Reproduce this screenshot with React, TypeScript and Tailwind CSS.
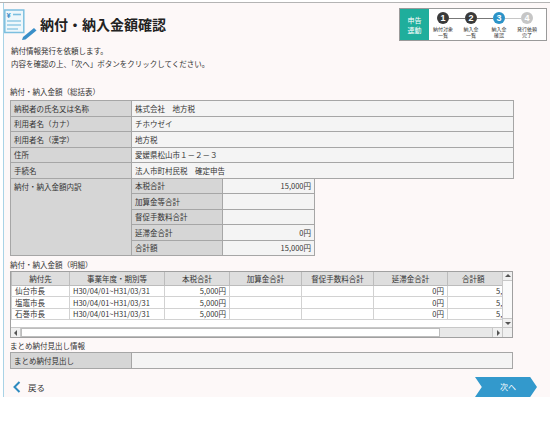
import React from 'react';

const summaryRows = [
  { label: '納税者の氏名又は名称', value: '株式会社　地方税' },
  { label: '利用者名（カナ）', value: 'チホウゼイ' },
  { label: '利用者名（漢字）', value: '地方税' },
  { label: '住所', value: '愛媛県松山市１－２－３' },
  { label: '手続名', value: '法人市町村民税　確定申告' },
];

const breakdown = [
  { label: '本税合計', value: '15,000円' },
  { label: '加算金等合計', value: '' },
  { label: '督促手数料合計', value: '' },
  { label: '延滞金合計', value: '0円' },
  { label: '合計額', value: '15,000円' },
];

const detailRows = [
  { to: '仙台市長', period: 'H30/04/01~H31/03/31' },
  { to: '塩竈市長', period: 'H30/04/01~H31/03/31' },
  { to: '石巻市長', period: 'H30/04/01~H31/03/31' },
];

const steps = [
  { n: '1', color: 'bg-[#3a3a3a]', top: '納付対象', bottom: '一覧' },
  { n: '2', color: 'bg-[#3a3a3a]', top: '納入金', bottom: '一覧' },
  { n: '3', color: 'bg-[#2b93c8]', top: '納入金', bottom: '確認' },
  { n: '4', color: 'bg-[#c6c6c6]', top: '発行依頼', bottom: '完了' },
];

const PageIcon = () => (
  <svg width="34" height="32" viewBox="0 0 34 32" className="shrink-0">
    <rect x="0.8" y="2" width="19" height="22.5" fill="#eef7fb" stroke="#7cbfdf" strokeWidth="1.5" />
    <text x="2.5" y="9.5" fontSize="7.5" fontWeight="bold" fill="#3a8fc8" fontFamily="Liberation Sans, sans-serif">¥</text>
    <line x1="9" y1="6.5" x2="17" y2="6.5" stroke="#7cbfdf" strokeWidth="1.6" />
    <line x1="3" y1="13" x2="17" y2="13" stroke="#7cbfdf" strokeWidth="1.2" />
    <line x1="3" y1="17" x2="17" y2="17" stroke="#7cbfdf" strokeWidth="1.2" />
    <line x1="3" y1="21" x2="14" y2="21" stroke="#7cbfdf" strokeWidth="1.2" />
    <polygon points="19,29 30,20 32.5,22.5 21.5,31.5 18,32" fill="#3a8fc8" />
  </svg>
);

const StepBox = () => (
  <div className="mt-[5px] mr-[3px] flex h-[33px] w-[148px] border border-[#9a9a9a] bg-white">
    <div className="flex w-[29px] flex-col items-center justify-center bg-[#1fae9c] text-[7px] leading-[10px] text-white">
      <span>申告</span>
      <span>連動</span>
    </div>
    <div className="flex flex-col">
      <div className="flex items-center pl-[8px] pt-[3px]">
        {steps.map((s, i) => (
          <React.Fragment key={s.n}>
            <div className={`flex h-[12px] w-[12px] items-center justify-center rounded-full ${s.color} text-[9px] font-bold leading-none text-white font-['Liberation_Sans',sans-serif]`}>
              {s.n}
            </div>
            {i < steps.length - 1 && (
              <div className={`h-[1px] w-[16px] ${i === 2 ? 'bg-[#c6c6c6]' : 'bg-[#777]'}`} />
            )}
          </React.Fragment>
        ))}
      </div>
      <div className="mt-[2px] flex">
        {steps.map((s) => (
          <div key={s.n} className="flex w-[28px] flex-col items-center text-[5px] leading-[6px] text-[#333]">
            <span>{s.top}</span>
            <span>{s.bottom}</span>
          </div>
        ))}
      </div>
    </div>
  </div>
);

const Arrow = ({ dir }: { dir: 'up' | 'down' | 'left' | 'right' }) => {
  const pts = {
    up: '1,5 4,2 7,5',
    down: '1,3 4,6 7,3',
    left: '5,1 2,4 5,7',
    right: '3,1 6,4 3,7',
  }[dir];
  return (
    <svg width="8" height="8" viewBox="0 0 8 8">
      <polygon points={pts} fill="#555" />
    </svg>
  );
};

export default function App() {
  return (
    <div className="h-[425px] w-[550px] overflow-hidden bg-white text-[#333] font-['Noto_Sans_CJK_JP',sans-serif]">
      <div className="h-[2px]" />
      <div className="border-t border-[#b4b4b4]">
        <div className="ml-[3px] flex h-[394px] flex-col border-l border-[#a9d3e6] bg-[#fdf8f8]">
          {/* Header */}
          <div className="flex h-[40px] items-start justify-between">
            <div className="flex items-start">
              <div className="mt-[5px]">
                <PageIcon />
              </div>
              <h1 className="ml-[2px] mt-[11px] text-[14px] font-bold leading-[20px] text-[#222]">納付・納入金額確認</h1>
            </div>
            <StepBox />
          </div>

          {/* Intro */}
          <div className="pl-[7px] pt-[1px] text-[7.5px] leading-[13px]">
            <p>納付情報発行を依頼します。</p>
            <p>内容を確認の上、「次へ」ボタンをクリックしてください。</p>
          </div>

          {/* Summary */}
          <div className="ml-[6px] mt-[16px] text-[7.5px] leading-[12px]">納付・納入金額（総括表）</div>
          <table className="ml-[6px] mt-[2px] w-[503px] table-fixed border-collapse text-[7.5px] leading-none">
            <colgroup>
              <col className="w-[121px]" />
              <col className="w-[91px]" />
              <col className="w-[92px]" />
              <col className="w-[199px]" />
            </colgroup>
            <tbody>
              {summaryRows.map((r) => (
                <tr key={r.label} className="h-[15.5px]">
                  <td className="border border-[#a6a6a6] bg-[#d6d6d6] px-[3px]">{r.label}</td>
                  <td colSpan={3} className="border border-[#a6a6a6] bg-[#f4f4f4] px-[3px]">{r.value}</td>
                </tr>
              ))}
              {breakdown.map((b, i) => (
                <tr key={b.label} className="h-[15.5px]">
                  {i === 0 && (
                    <td rowSpan={5} className="border border-[#a6a6a6] bg-[#d6d6d6] px-[3px] pt-[4px] align-top">
                      納付・納入金額内訳
                    </td>
                  )}
                  <td className="border border-[#a6a6a6] bg-[#d6d6d6] px-[3px]">{b.label}</td>
                  <td className="border border-[#a6a6a6] bg-[#f4f4f4] px-[3px] text-right">{b.value}</td>
                  {i === 0 && <td rowSpan={5} className="border-0" />}
                </tr>
              ))}
            </tbody>
          </table>

          {/* Detail */}
          <div className="ml-[6px] mt-[3px] text-[7.5px] leading-[12px]">納付・納入金額（明細）</div>
          <div className="ml-[6px] flex h-[67px] w-[503px] flex-col border border-[#a0a0a0] bg-white">
            <div className="flex min-h-0 flex-1">
              <div className="flex-1 overflow-hidden">
                <table className="w-[506px] table-fixed border-collapse text-[7.5px] leading-none">
                  <colgroup>
                    <col className="w-[58px]" />
                    <col className="w-[95px]" />
                    <col className="w-[65px]" />
                    <col className="w-[72px]" />
                    <col className="w-[72px]" />
                    <col className="w-[74px]" />
                    <col className="w-[70px]" />
                  </colgroup>
                  <thead>
                    <tr className="h-[13px] bg-[#dedede]">
                      {['納付先', '事業年度・期別等', '本税合計', '加算金合計', '督促手数料合計', '延滞金合計'].map((h) => (
                        <th key={h} className="border-x border-b border-[#bcbcbc] font-normal">{h}</th>
                      ))}
                      <th className="border-x border-b border-[#bcbcbc] pl-[14px] text-left font-normal">合計額</th>
                    </tr>
                  </thead>
                  <tbody>
                    {detailRows.map((r) => (
                      <tr key={r.to} className="h-[11.5px]">
                        <td className="border border-[#d2d2d2] px-[3px]">{r.to}</td>
                        <td className="border border-[#d2d2d2] px-[3px]">{r.period}</td>
                        <td className="border border-[#d2d2d2] px-[3px] text-right">5,000円</td>
                        <td className="border border-[#d2d2d2]" />
                        <td className="border border-[#d2d2d2]" />
                        <td className="border border-[#d2d2d2] px-[3px] text-right">0円</td>
                        <td className="border border-[#d2d2d2] whitespace-nowrap pl-[48px]">5,000円</td>
                      </tr>
                    ))}
                  </tbody>
                </table>
              </div>
              <div className="flex w-[10px] flex-col justify-between border-l border-[#c8c8c8] bg-[#fafafa]">
                <div className="flex h-[9px] items-center justify-center border-b border-[#c8c8c8] bg-[#f0f0f0]">
                  <Arrow dir="up" />
                </div>
                <div className="flex h-[9px] items-center justify-center border-t border-[#c8c8c8] bg-[#f0f0f0]">
                  <Arrow dir="down" />
                </div>
              </div>
            </div>
            <div className="flex h-[10px] border-t border-[#c8c8c8]">
              <div className="flex w-[10px] items-center justify-center border-r border-[#c8c8c8] bg-[#f0f0f0]">
                <Arrow dir="left" />
              </div>
              <div className="w-[419px] border border-[#bdbdbd] bg-white" />
              <div className="flex-1 bg-[#e8e8e8]" />
              <div className="flex w-[10px] items-center justify-center border-l border-[#c8c8c8] bg-[#f0f0f0]">
                <Arrow dir="right" />
              </div>
              <div className="w-[10px] border-l border-[#c8c8c8] bg-[#f0f0f0]" />
            </div>
          </div>

          {/* Summary heading info */}
          <div className="ml-[6px] mt-[2px] text-[7.5px] leading-[12px]">まとめ納付見出し情報</div>
          <div className="ml-[6px] flex h-[17px] w-[503px] border border-[#a6a6a6] text-[7.5px]">
            <div className="flex w-[121px] items-center border-r border-[#a6a6a6] bg-[#d6d6d6] px-[3px]">まとめ納付見出し</div>
            <div className="flex-1 bg-[#f4f4f4]" />
          </div>

          {/* Footer buttons */}
          <div className="mt-[8px] flex h-[20px] items-center justify-between pl-[9px] pr-[13px]">
            <button className="flex items-center gap-[7px] text-[8.5px] text-[#333]">
              <svg width="8" height="12" viewBox="0 0 8 12">
                <polyline points="6.5,1 1.5,6 6.5,11" fill="none" stroke="#2e8bc0" strokeWidth="2" />
              </svg>
              <span>戻る</span>
            </button>
            <button className="flex h-[20px] w-[62px] items-center justify-center bg-[#3399cc] pl-[4px] text-[8px] text-white [clip-path:polygon(0_0,89%_0,100%_50%,89%_100%,0_100%,11%_50%)]">
              次へ
            </button>
          </div>
        </div>
      </div>
    </div>
  );
}
